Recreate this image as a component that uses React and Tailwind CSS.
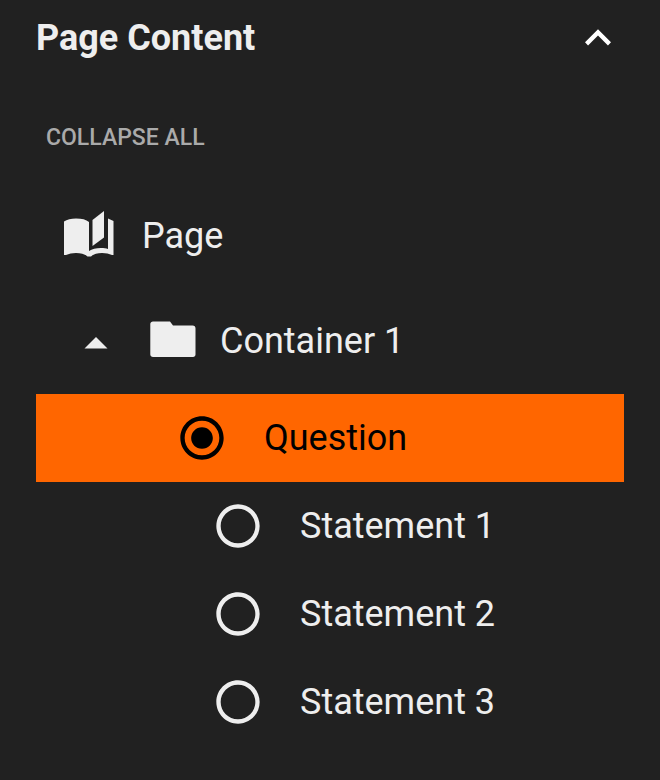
import React, { useState } from "react";
import { MdRadioButtonChecked, MdRadioButtonUnchecked, MdExpandLess } from "react-icons/md";

const statements = ["Statement 1", "Statement 2", "Statement 3"];

const BookIcon = ({ className }) => (
  <svg viewBox="0 0 50 50" className={className} fill="currentColor" aria-hidden="true">
    <path d="M0 10.500C3 8.500 7 7.500 12 7.500c6 0 10 1 13 3.500v29c3-2 7-3 12-3 3 0 5 .3 7 1V7.500L49.500 10v34H48c-3-1.300-6-2-10-2-5 0-8.500 1-11 3.500h-3.500C21 43 17 42 12 42c-4 0-7 .7-10 2H0z" />
    <path d="M28.500 9L40 0v26.500L28.500 35z" />
  </svg>
);

const FolderIcon = ({ className }) => (
  <svg viewBox="0 0 46 40" className={className} fill="currentColor" aria-hidden="true">
    <path d="M3 .5h17l3 4h19.500c2 0 3 1 3 3V33.500c0 1.500-1 2.500-2.500 2.500H3C1.500 36 .3 35 .3 33.500V3C.3 1.500 1.500.5 3 .5z" />
  </svg>
);

const CaretIcon = ({ className }) => (
  <svg viewBox="0 0 48 48" className={className} fill="currentColor" aria-hidden="true">
    <path d="M12.500 31.500L24 20l11.500 11.500z" />
  </svg>
);

const TreeLabel = ({ children }) => <span className="text-4xl leading-10">{children}</span>;

const App = () => {
  const [open, setOpen] = useState(true);
  const [expanded, setExpanded] = useState(true);
  const [selected, setSelected] = useState("Question");

  const rowColor = (name) =>
    selected === name ? "bg-[#ff6600] text-black" : "text-[#eeeeee]";

  return (
    <div className="min-h-screen bg-[#212121] px-9 pt-3 pb-8 font-['Roboto',sans-serif] text-[#eeeeee]">
      {/* Header */}
      <div className="flex items-center justify-between">
        <h1 className="text-4xl leading-11 font-bold">Page Content</h1>
        <button type="button" aria-label="Toggle page content" aria-expanded={open} onClick={() => setOpen(!open)} className="text-white">
          <MdExpandLess className={`size-[52px] ${open ? "" : "rotate-180"}`} />
        </button>
      </div>

      {open && (
        <>
          <button
            type="button"
            onClick={() => setExpanded(!expanded)}
            className="mt-15 ml-2.5 block text-[23px] leading-7 font-medium text-[#aaaaaa]"
          >
            {expanded ? "COLLAPSE ALL" : "EXPAND ALL"}
          </button>

          {/* Tree */}
          <button type="button" className="mt-8 flex h-[104px] w-full items-center gap-7 pl-7">
            <BookIcon className="size-[50px]" />
            <TreeLabel>Page</TreeLabel>
          </button>

          <div className="flex h-[106px] items-center pl-9">
            <button type="button" aria-label="Toggle Container 1" aria-expanded={expanded} onClick={() => setExpanded(!expanded)}>
              <CaretIcon className={`size-12 ${expanded ? "" : "rotate-180"}`} />
            </button>
            <button type="button" className="ml-[30px] flex items-center gap-6">
              <FolderIcon className="h-10 w-[46px]" />
              <TreeLabel>Container 1</TreeLabel>
            </button>
          </div>

          {expanded && (
            <div>
              <button
                type="button"
                onClick={() => setSelected("Question")}
                className={`flex h-[88px] w-full items-center gap-9 pl-35 ${rowColor("Question")}`}
              >
                <MdRadioButtonChecked className="size-[52px]" />
                <TreeLabel>Question</TreeLabel>
              </button>
              {statements.map((name) => (
                <button
                  key={name}
                  type="button"
                  onClick={() => setSelected(name)}
                  className={`flex h-[88px] w-full items-center gap-9 pl-44 ${rowColor(name)}`}
                >
                  <MdRadioButtonUnchecked className="size-[52px]" />
                  <TreeLabel>{name}</TreeLabel>
                </button>
              ))}
            </div>
          )}
        </>
      )}
    </div>
  );
};

export default App;
